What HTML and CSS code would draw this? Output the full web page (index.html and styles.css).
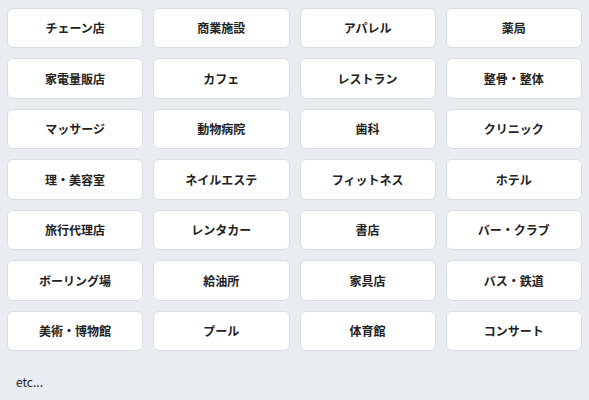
FILE: index.html
```html
<!DOCTYPE html>
<html lang="ja">
<head>
<meta charset="utf-8">
<link rel="stylesheet" href="styles.css">
</head>
<body>
<div class="page">
  <div class="grid">
    <div class="item">チェーン店</div>
    <div class="item">商業施設</div>
    <div class="item">アパレル</div>
    <div class="item">薬局</div>
    <div class="item">家電量販店</div>
    <div class="item">カフェ</div>
    <div class="item">レストラン</div>
    <div class="item">整骨・整体</div>
    <div class="item">マッサージ</div>
    <div class="item">動物病院</div>
    <div class="item">歯科</div>
    <div class="item">クリニック</div>
    <div class="item">理・美容室</div>
    <div class="item">ネイルエステ</div>
    <div class="item">フィットネス</div>
    <div class="item">ホテル</div>
    <div class="item">旅行代理店</div>
    <div class="item">レンタカー</div>
    <div class="item">書店</div>
    <div class="item">バー・クラブ</div>
    <div class="item">ボーリング場</div>
    <div class="item">給油所</div>
    <div class="item">家具店</div>
    <div class="item">バス・鉄道</div>
    <div class="item">美術・博物館</div>
    <div class="item">プール</div>
    <div class="item">体育館</div>
    <div class="item">コンサート</div>
  </div>
  <p class="etc">etc...</p>
</div>
</body>
</html>
```
FILE: styles.css
```css
html, body {
  margin: 0;
  padding: 0;
  background: #e9edf1;
}
.page {
  padding: 7.5px 7px 0 7px;
  font-family: "Noto Sans CJK JP", "Noto Sans", sans-serif;
  color: #222;
}
.grid {
  display: grid;
  grid-template-columns: repeat(4, 1fr);
  column-gap: 10px;
  row-gap: 10px;
}
.item {
  box-sizing: border-box;
  height: 40.5px;
  background: #fff;
  border: 1px solid #d6dee6;
  border-radius: 6px;
  display: flex;
  align-items: center;
  justify-content: center;
  font-size: 12px;
  font-weight: 700;
  letter-spacing: 0;
}
.etc {
  margin: 22px 0 0 9px;
  font-size: 12px;
  font-weight: 400;
  line-height: 17px;
}
```
